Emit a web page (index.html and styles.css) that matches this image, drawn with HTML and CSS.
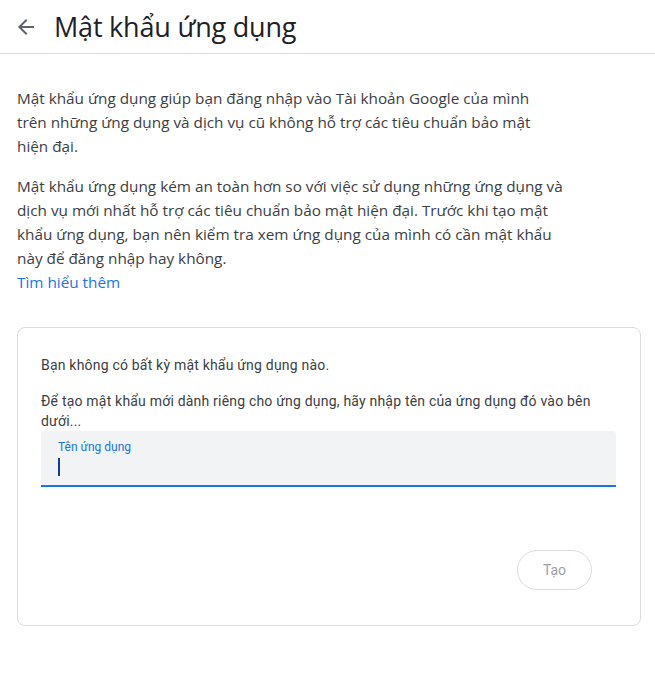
FILE: index.html
```html
<!DOCTYPE html>
<html lang="vi">
<head>
<meta charset="utf-8">
<link rel="stylesheet" href="styles.css">
</head>
<body>
<header class="topbar">
  <button class="back" aria-label="Quay lại">
    <svg width="24" height="24" viewBox="0 0 24 24"><path d="M20 11H7.83l5.59-5.59L12 4l-8 8 8 8 1.41-1.41L7.83 13H20v-2z" fill="#5f6368"/></svg>
  </button>
  <h1 class="title">Mật khẩu ứng dụng</h1>
</header>
<main class="content">
  <p class="para first">Mật khẩu ứng dụng giúp bạn đăng nhập vào Tài khoản Google của mình trên những ứng dụng và dịch vụ cũ không hỗ trợ các tiêu chuẩn bảo mật hiện đại.</p>
  <p class="para second">Mật khẩu ứng dụng kém an toàn hơn so với việc sử dụng những ứng dụng và dịch vụ mới nhất hỗ trợ các tiêu chuẩn bảo mật hiện đại. Trước khi tạo mật khẩu ứng dụng, bạn nên kiểm tra xem ứng dụng của mình có cần mật khẩu này để đăng nhập hay không.</p>
  <a class="link" href="#">Tìm hiểu thêm</a>

  <section class="card">
    <p class="note">Bạn không có bất kỳ mật khẩu ứng dụng nào.</p>
    <p class="note hint">Để tạo mật khẩu mới dành riêng cho ứng dụng, hãy nhập tên của ứng dụng đó vào bên dưới...</p>
    <div class="field">
      <span class="label">Tên ứng dụng</span>
      <span class="caret"></span>
    </div>
    <div class="actions">
      <button class="create" disabled>Tạo</button>
    </div>
  </section>
</main>
</body>
</html>
```
FILE: styles.css
```css
* { box-sizing: border-box; }
html, body { margin: 0; background: #fff; }
body {
  font-family: Roboto, "Noto Sans", Arial, sans-serif;
  color: #202124;
}
.topbar {
  height: 54px;
  border-bottom: 1px solid #dadce0;
  display: flex;
  align-items: center;
  padding-left: 14px;
}
.back {
  width: 24px;
  height: 24px;
  padding: 0;
  border: 0;
  background: none;
  display: flex;
}
.title {
  margin: 0 0 0 16px;
  font-family: "Open Sans", Roboto, sans-serif;
  font-weight: 400;
  font-size: 27px;
  color: #202124;
  letter-spacing: -0.2px;
  line-height: 36px;
}
.content {
  padding: 32px 15px 0 17px;
}
.para {
  margin: 0;
  width: 546px;
  font-family: "Open Sans", Roboto, sans-serif;
  font-size: 15.3px;
  line-height: 24px;
  color: #3c4043;
}
.para.first { width: 538px; }
.para.second { margin-top: 16px; }
.link {
  display: block;
  font-family: "Open Sans", Roboto, sans-serif;
  font-size: 15.3px;
  line-height: 24px;
  color: #1a73e8;
  text-decoration: none;
}
.card {
  margin-top: 33px;
  width: 624px;
  height: 299px;
  border: 1px solid #dadce0;
  border-radius: 8px;
  padding: 27px 24px 0 23px;
}
.note {
  margin: 0;
  font-size: 14px;
  line-height: 20px;
  letter-spacing: 0.2px;
  color: #3c4043;
}
.note.hint { margin-top: 16px; }
.field {
  margin-top: 0;
  height: 56px;
  background: #f1f3f4;
  border-radius: 4px 4px 0 0;
  border-bottom: 2px solid #1a73e8;
  padding: 8px 17px 0;
  display: flex;
  flex-direction: column;
}
.label {
  font-size: 12px;
  line-height: 16px;
  color: #1a73e8;
}
.caret {
  margin-top: 3px;
  width: 1.5px;
  height: 18px;
  background: #1a3a8e;
}
.actions {
  display: flex;
  justify-content: flex-end;
  margin-top: 63px;
  padding-right: 24px;
}
.create {
  width: 75px;
  height: 40px;
  border: 1px solid #dadce0;
  border-radius: 20px;
  background: #fff;
  font-family: Roboto, sans-serif;
  font-size: 14px;
  color: #9aa0a6;
}
```
